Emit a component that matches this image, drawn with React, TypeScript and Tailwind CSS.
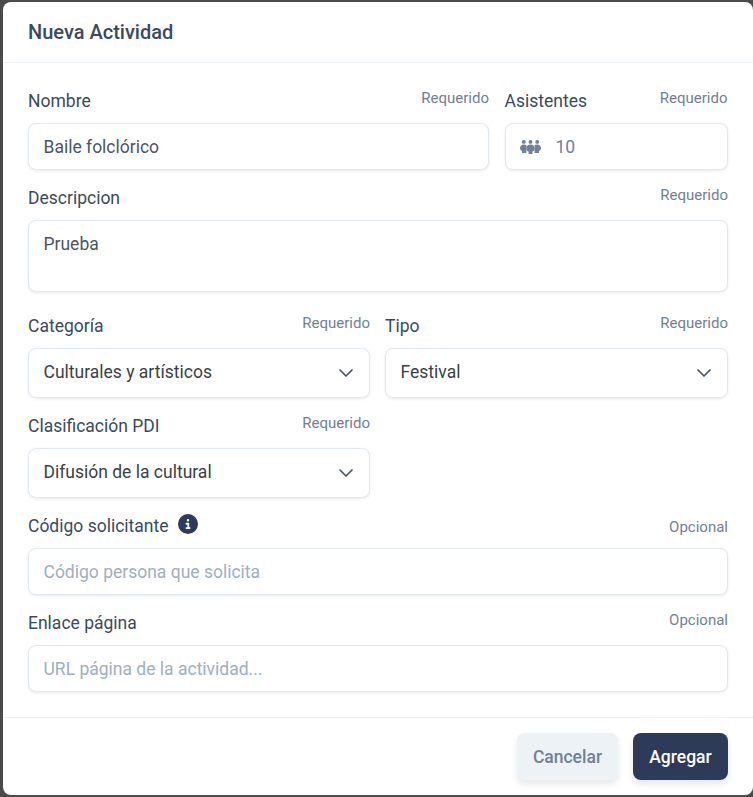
import type { ReactNode } from "react";
import { ChevronDown } from "lucide-react";
import { FaCircleInfo } from "react-icons/fa6";

const boxClass = "w-full bg-white border border-[#e2e8f0] rounded-[8px] shadow-[0_1px_3px_rgba(45,55,72,0.1)] text-[17.5px]";

function PeopleIcon() {
  return (
    <svg width="21" height="14" viewBox="0 0 21 14" fill="currentColor" className="shrink-0">
      <circle cx="3.8" cy="1.9" r="1.9" />
      <circle cx="10.5" cy="1.9" r="1.9" />
      <circle cx="17.2" cy="1.9" r="1.9" />
      <path d="M4 4.4C1.6 4.4 0 6.1 0 8.2c0 1.5.9 2.4 2 2.7V13h4.4V4.9C5.7 4.6 4.9 4.4 4 4.4z" />
      <path d="M17 4.4c2.4 0 4 1.7 4 3.8 0 1.5-.9 2.4-2 2.7V13h-4.4V4.9c.7-.3 1.5-.5 2.4-.5z" />
      <path d="M10.5 4.5c-2.4 0-4.2 1.6-4.2 3.9 0 1.6 1 2.7 2.3 3.2V14h3.8v-2.4c1.3-.5 2.3-1.6 2.3-3.2 0-2.3-1.8-3.9-4.2-3.9z" />
    </svg>
  );
}

function Field({ label, hint, info, children }: { label: string; hint?: string; info?: boolean; children: ReactNode }) {
  return (
    <div className="min-w-0">
      <div className="flex justify-between h-6 mb-[10px]">
        <span className="flex items-center gap-[9.5px] text-[17.5px] leading-6 text-[#3a4a5e]">
          {label}
          {info && <FaCircleInfo className="text-[#2d3a5a] text-[20px] -mt-1" />}
        </span>
        {hint && <span className={`text-[15px] leading-[18px] text-[#718096] ${info ? "mt-1" : ""}`}>{hint}</span>}
      </div>
      {children}
    </div>
  );
}

function TextBox({ value, placeholder }: { value?: string; placeholder?: string }) {
  return (
    <div className={`${boxClass} h-[47px] px-[14.5px] pt-px flex items-center ${value ? "text-[#4a5568]" : "text-[#a0aec0]"}`}>
      {value ?? placeholder}
    </div>
  );
}

function SelectBox({ value }: { value: string }) {
  return (
    <div className={`${boxClass} h-[50px] pl-[14.5px] pr-[11.5px] pb-[2px] flex items-center justify-between text-[#3a3f47]`}>
      <span>{value}</span>
      <ChevronDown size={24} strokeWidth={1.75} className="text-[#4a5568] mt-[2px]" />
    </div>
  );
}

export default function App() {
  return (
    <div className="h-[797px] overflow-hidden bg-[#4b4b4b] pl-[3px] pt-[2px] font-['Roboto',sans-serif]">
      <div className="w-[750px] h-[793px] bg-white rounded-[8px] flex flex-col">
        <div className="h-[61px] border-b border-[#edf2f7] px-[25px] flex items-center">
          <h2 className="text-[20px] font-medium text-[#3a4a5e]">Nueva Actividad</h2>
        </div>

        <div className="flex-1 px-[25px] pt-[26px] flex flex-col gap-4">
          <div className="grid grid-cols-[461px_223px] gap-x-[15.5px]">
            <Field label="Nombre" hint="Requerido">
              <TextBox value="Baile folclórico" />
            </Field>
            <Field label="Asistentes" hint="Requerido">
              <div className={`${boxClass} h-[47px] pl-[14px] pt-px flex items-center gap-[15px] text-[#718096]`}>
                <PeopleIcon />
                <span>10</span>
              </div>
            </Field>
          </div>

          <div className="mb-[6px]">
            <Field label="Descripcion" hint="Requerido">
              <div className={`${boxClass} h-[72px] px-[14.5px] pt-[10px] text-[#4a5568]`}>Prueba</div>
            </Field>
          </div>

          <div className="grid grid-cols-[342px_343px] gap-x-[15px] gap-y-4">
            <Field label="Categoría" hint="Requerido">
              <SelectBox value="Culturales y artísticos" />
            </Field>
            <Field label="Tipo" hint="Requerido">
              <SelectBox value="Festival" />
            </Field>
            <Field label="Clasificación PDI" hint="Requerido">
              <SelectBox value="Difusión de la cultural" />
            </Field>
          </div>

          <Field label="Código solicitante" hint="Opcional" info>
            <TextBox placeholder="Código persona que solicita" />
          </Field>
          <Field label="Enlace página" hint="Opcional">
            <TextBox placeholder="URL página de la actividad..." />
          </Field>
        </div>

        <div className="h-[78px] border-t border-[#edf2f7] px-[25px] pt-[15px] flex justify-end gap-[15px]">
          <button className="w-[101px] h-[47px] pt-px rounded-[8px] bg-[#edf2f7] text-[#718096] text-[17.5px] font-medium shadow-[0_4px_6px_rgba(45,55,72,0.12)]">
            Cancelar
          </button>
          <button className="w-[95px] h-[47px] pt-px rounded-[8px] bg-[#2d3a5a] text-white text-[17.5px] font-medium shadow-[0_4px_6px_rgba(45,55,72,0.12)]">
            Agregar
          </button>
        </div>
      </div>
    </div>
  );
}
